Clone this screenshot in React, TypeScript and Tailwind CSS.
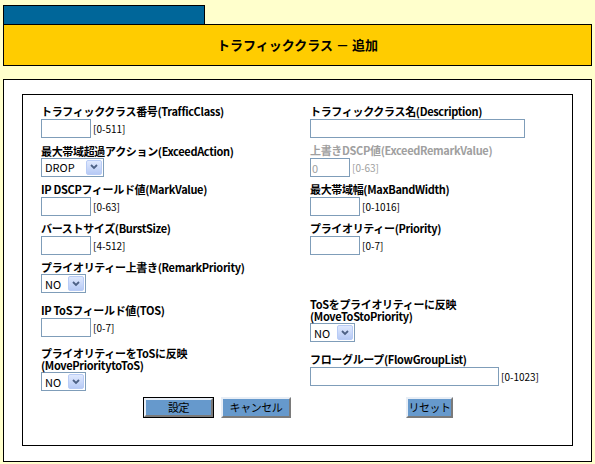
import React from 'react';

const font = { fontFamily: '"Noto Sans CJK JP", "Liberation Sans", sans-serif' };

function Label({
  children,
  disabled,
  tight,
}: {
  children: React.ReactNode;
  disabled?: boolean;
  tight?: boolean;
}) {
  return (
    <div
      className={`text-[11px] font-bold tracking-[-0.03em] whitespace-nowrap ${tight ? 'leading-[12px] pb-[1px]' : 'leading-[14px]'} ${disabled ? 'text-[#A0A0A0]' : 'text-black'}`}
    >
      {children}
    </div>
  );
}

function TextBox({
  w,
  hint,
  value,
  disabled,
}: {
  w: string;
  hint?: string;
  value?: string;
  disabled?: boolean;
}) {
  return (
    <div className="flex items-center mt-[1px]">
      <input
        readOnly
        defaultValue={value}
        className={`${w} h-[19px] border border-[#7F9DB9] bg-white px-[1px] text-[11px] outline-none ${disabled ? 'text-[#A0A0A0]' : 'text-black'}`}
      />
      {hint && (
        <span
          className={`ml-[2px] text-[10px] leading-[12px] whitespace-nowrap ${disabled ? 'text-[#A0A0A0]' : 'text-black'}`}
        >
          {hint}
        </span>
      )}
    </div>
  );
}

function Select({ w, value }: { w: string; value: string }) {
  return (
    <div className={`${w} h-[19px] border border-[#7F9DB9] bg-white flex items-center p-[1px]`}>
      <span className="flex-1 pl-[2px] text-[11px] leading-[14px]">{value}</span>
      <span className="w-[16px] h-[15px] bg-linear-to-b from-[#E0E9FE] to-[#B7CAF5] border border-[#B9CCF6] rounded-[2px] flex items-center justify-center">
        <svg width="8" height="6" viewBox="0 0 8 6">
          <path d="M1 1 L4 4 L7 1" stroke="#4D6185" strokeWidth="1.8" fill="none" />
        </svg>
      </span>
    </div>
  );
}

function Button({ children, w, primary }: { children: React.ReactNode; w: string; primary?: boolean }) {
  const inner = (
    <div
      className={`${primary ? 'w-full h-full' : w + ' h-[21px]'} bg-[#6699CC] border-2 border-t-[#E8EEF6] border-l-[#E8EEF6] border-r-[#7A7A7A] border-b-[#7A7A7A] flex items-center justify-center text-[11px] leading-none tracking-[-0.04em] whitespace-nowrap text-black`}
    >
      {children}
    </div>
  );
  if (primary) {
    return <div className={`${w} h-[21px] border border-black`}>{inner}</div>;
  }
  return inner;
}

export default function App() {
  return (
    <div className="min-h-screen bg-[#FFFFCC] pt-[5px]" style={font}>
      {/* Header */}
      <div className="ml-[3px] w-[202px] h-[19px] bg-[#006699] border border-b-0 border-black" />
      <div className="ml-[3px] w-[589px] h-[42px] bg-[#FFCC00] border border-black flex items-center justify-center text-[13px] font-bold text-black">
        トラフィッククラス － 追加
      </div>

      {/* Form */}
      <div className="ml-[3px] mt-[13px] w-[589px] border border-black bg-white pt-[14px] pb-[15px] px-[18px]">
        <div className="h-[352px] border border-black pt-[9px] pl-[18px]">
          <div className="grid grid-cols-[269px_1fr] items-center gap-y-[5px]">
            <div>
              <Label>トラフィッククラス番号(TrafficClass)</Label>
              <TextBox w="w-[50px]" hint="[0-511]" />
            </div>
            <div>
              <Label>トラフィッククラス名(Description)</Label>
              <TextBox w="w-[215px]" />
            </div>

            <div>
              <Label>最大帯域超過アクション(ExceedAction)</Label>
              <Select w="w-[63px]" value="DROP" />
            </div>
            <div>
              <Label disabled>上書きDSCP値(ExceedRemarkValue)</Label>
              <TextBox w="w-[40px]" hint="[0-63]" value="0" disabled />
            </div>

            <div>
              <Label>IP DSCPフィールド値(MarkValue)</Label>
              <TextBox w="w-[50px]" hint="[0-63]" />
            </div>
            <div>
              <Label>最大帯域幅(MaxBandWidth)</Label>
              <TextBox w="w-[50px]" hint="[0-1016]" />
            </div>

            <div>
              <Label>バーストサイズ(BurstSize)</Label>
              <TextBox w="w-[50px]" hint="[4-512]" />
            </div>
            <div>
              <Label>プライオリティー(Priority)</Label>
              <TextBox w="w-[50px]" hint="[0-7]" />
            </div>

            <div>
              <Label>プライオリティー上書き(RemarkPriority)</Label>
              <Select w="w-[45px]" value="NO" />
            </div>
            <div />

            <div>
              <Label>IP ToSフィールド値(TOS)</Label>
              <TextBox w="w-[50px]" hint="[0-7]" />
            </div>
            <div>
              <Label tight>
                ToSをプライオリティーに反映
                <br />
                (MoveToStoPriority)
              </Label>
              <Select w="w-[45px]" value="NO" />
            </div>

            <div>
              <Label tight>
                プライオリティーをToSに反映
                <br />
                (MovePrioritytoToS)
              </Label>
              <Select w="w-[45px]" value="NO" />
            </div>
            <div>
              <Label>フローグループ(FlowGroupList)</Label>
              <TextBox w="w-[189px]" hint="[0-1023]" />
            </div>

            <div className="flex gap-[7px] pl-[102px] mt-[1px]">
              <Button w="w-[71px]" primary>
                設定
              </Button>
              <Button w="w-[70px]">キャンセル</Button>
            </div>
            <div className="flex pl-[96px] mt-[1px]">
              <Button w="w-[47px]">リセット</Button>
            </div>
          </div>
        </div>
      </div>
    </div>
  );
}
